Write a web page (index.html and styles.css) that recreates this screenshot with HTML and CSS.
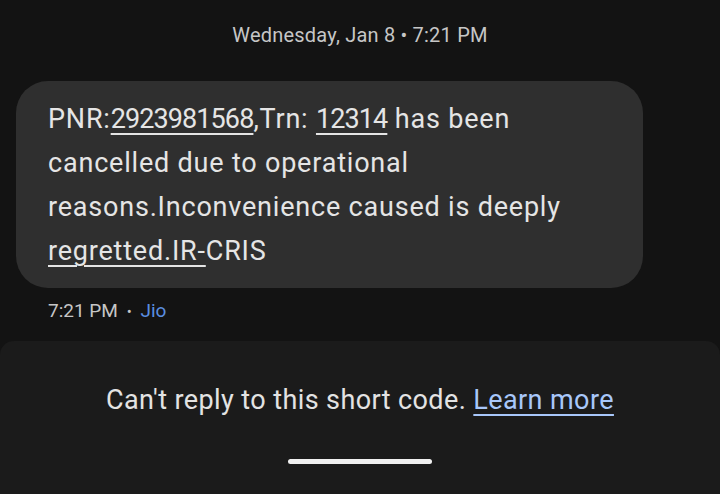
FILE: index.html
```html
<!DOCTYPE html>
<html>
<head>
<meta charset="utf-8">
<link rel="stylesheet" href="styles.css">
</head>
<body>
<div class="screen">
  <div class="thread">
    <div class="date">Wednesday, Jan 8 • 7:21 PM</div>
    <div class="bubble">
      <p class="msg">PNR:<span class="link num">2923981568</span>,Trn: <span class="link num">12314</span> has been cancelled due to operational reasons.Inconvenience caused is deeply <span class="link">regretted.IR-</span>CRIS</p>
    </div>
    <div class="meta">7:21 PM <span class="dot">•</span> <span class="carrier">Jio</span></div>
  </div>
  <div class="panel">
    <div class="notice">Can't reply to this short code. <span class="learn">Learn more</span></div>
    <div class="handle"></div>
  </div>
</div>
</body>
</html>
```
FILE: styles.css
```css
* { box-sizing: border-box; }
html, body { margin: 0; padding: 0; background: #131313; }
body { font-family: Roboto, "Open Sans", sans-serif; width: 720px; height: 494px; overflow: hidden; }
.screen { display: flex; flex-direction: column; height: 494px; }
.thread { flex: 1; display: flex; flex-direction: column; padding: 0 16px; }
.date { text-align: center; color: #c6c6c6; font-size: 20px; line-height: 24px; margin-top: 23px; letter-spacing: 0.2px; }
.bubble { margin-top: 34px; width: 627px; background: #2f2f2f; border-radius: 32px; padding: 16px 32px 15px 32px; }
.msg { margin: 0; color: #e5e5e5; font-size: 27px; line-height: 44px; letter-spacing: 0.8px; }
.link { text-decoration: underline; text-decoration-thickness: 2px; text-underline-offset: 5px; }
.num { letter-spacing: -0.9px; }
.meta { margin-top: 11px; padding-left: 32px; color: #c6c6c6; font-size: 19px; line-height: 24px; }
.dot { font-size: 15px; margin: 0 4px; }
.carrier { color: #5a8ee0; }
.panel { height: 153px; background: #1b1b1b; border-radius: 14px 14px 0 0; display: flex; flex-direction: column; align-items: center; }
.notice { margin-top: 42px; color: #e3e3e3; font-size: 27px; line-height: 34px; letter-spacing: 0.4px; }
.learn { color: #a8c7fa; text-decoration: underline; text-decoration-thickness: 2px; text-underline-offset: 5px; }
.handle { margin-top: 42px; width: 144px; height: 5px; border-radius: 3px; background: #f0f0f0; }
```
